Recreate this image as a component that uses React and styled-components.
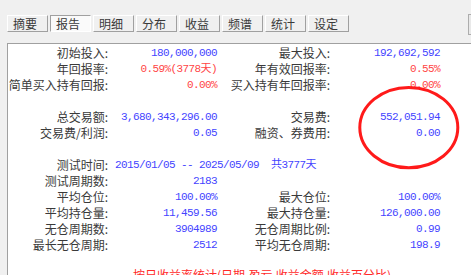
import React from 'react';
import styled, { createGlobalStyle } from 'styled-components';

const GlobalStyle = createGlobalStyle`
  html, body {
    margin: 0;
    padding: 0;
    background: #f0f0f0;
    overflow: hidden;
  }
`;

const Window = styled.div`
  position: relative;
  width: 471px;
  height: 275px;
  overflow: hidden;
  background: #f0f0f0;
  font-family: 'Noto Sans CJK SC', sans-serif;
  font-size: 12px;
  color: #3a3a3a;
`;

const TabBar = styled.div`
  display: flex;
  align-items: flex-start;
  gap: 2px;
  height: 43px;
  padding: 15px 0 0 7px;
  box-sizing: border-box;
`;

const Tab = styled.div`
  width: 41px;
  height: 17px;
  box-sizing: border-box;
  padding-left: 5px;
  line-height: 15px;
  white-space: nowrap;
  background: ${p => (p.active ? '#fafafa' : '#f0f0f0')};
  border-style: solid;
  border-width: 1px;
  border-color: ${p =>
    p.active ? '#a0a0a0 #ffffff #ffffff #a0a0a0' : '#ffffff #a0a0a0 #a0a0a0 #ffffff'};
  color: #3a3a3a;
`;

const EdgeButton = styled.div`
  margin-left: auto;
  margin-top: -1px;
  margin-right: -19px;
  width: 22px;
  height: 21px;
  box-sizing: border-box;
  border: 1px solid #adadad;
  background: #e9e9e9;
`;

const Panel = styled.div`
  margin-left: 7px;
  height: 240px;
  padding-top: 1px;
  background: #ffffff;
  border-top: 1px solid #a0a0a0;
  border-left: 1px solid #a0a0a0;
`;

const Row = styled.div`
  display: grid;
  grid-template-columns: 100px 109px 113px 110px;
  height: 16px;
  line-height: 16px;
  white-space: nowrap;
`;

const Spacer = styled.div`
  height: 16px;
`;

const Label = styled.span`
  text-align: right;
  color: #3a3a3a;
`;

const Value = styled.span`
  text-align: right;
  font-family: 'Liberation Mono', 'Noto Sans CJK SC', monospace;
  font-size: 11px;
  letter-spacing: -0.6px;
  color: ${p => (p.tone === 'red' ? '#ff4545' : '#4444ff')};
`;

const SpanValue = styled(Value)`
  grid-column: 2 / span 3;
  text-align: left;
  padding-left: 7px;
  white-space: pre;
`;

const Note = styled.div`
  margin-top: 14px;
  padding-left: 125px;
  height: 16px;
  line-height: 16px;
  color: #ff2a2a;
  white-space: nowrap;
`;

const Marker = styled.svg`
  position: absolute;
  left: 355px;
  top: 82px;
  pointer-events: none;
`;

const tabs = ['摘要', '报告', '明细', '分布', '收益', '频谱', '统计', '设定'];

const rows = [
  ['初始投入:', '180,000,000', '', '最大投入:', '192,692,592', ''],
  ['年回报率:', '0.59%(3778天)', 'red', '年有效回报率:', '0.55%', 'red'],
  ['简单买入持有回报:', '0.00%', 'red', '买入持有年回报率:', '0.00%', 'red'],
  null,
  ['总交易额:', '3,680,343,296.00', '', '交易费:', '552,051.94', ''],
  ['交易费/利润:', '0.05', '', '融资、券费用:', '0.00', ''],
  null,
  'time',
  ['测试周期数:', '2183', '', '', '', ''],
  ['平均仓位:', '100.00%', '', '最大仓位:', '100.00%', ''],
  ['平均持仓量:', '11,459.56', '', '最大持仓量:', '126,000.00', ''],
  ['无仓周期数:', '3904989', '', '无仓周期比例:', '0.99', ''],
  ['最长无仓周期:', '2512', '', '平均无仓周期:', '198.9', ''],
];

export default function App() {
  return (
    <Window>
      <GlobalStyle />
      <TabBar>
        {tabs.map(t => (
          <Tab key={t} active={t === '报告'}>
            {t}
          </Tab>
        ))}
        <EdgeButton />
      </TabBar>

      <Panel>
        {rows.map((r, i) => {
          if (r === null) return <Spacer key={i} />;
          if (r === 'time')
            return (
              <Row key={i}>
                <Label>测试时间:</Label>
                <SpanValue>{'2015/01/05 -- 2025/05/09  共3777天'}</SpanValue>
              </Row>
            );
          return (
            <Row key={i}>
              <Label>{r[0]}</Label>
              <Value tone={r[2]}>{r[1]}</Value>
              <Label>{r[3]}</Label>
              <Value tone={r[5]}>{r[4]}</Value>
            </Row>
          );
        })}
        <Note>按日收益率统计(日期,盈亏,收益金额,收益百分比)</Note>
      </Panel>

      <Marker width="110" height="92" viewBox="0 0 110 92">
        <ellipse cx="53.8" cy="45.6" rx="49" ry="40.2" fill="none" stroke="#ff1a1a" strokeWidth="3" />
      </Marker>
    </Window>
  );
}
